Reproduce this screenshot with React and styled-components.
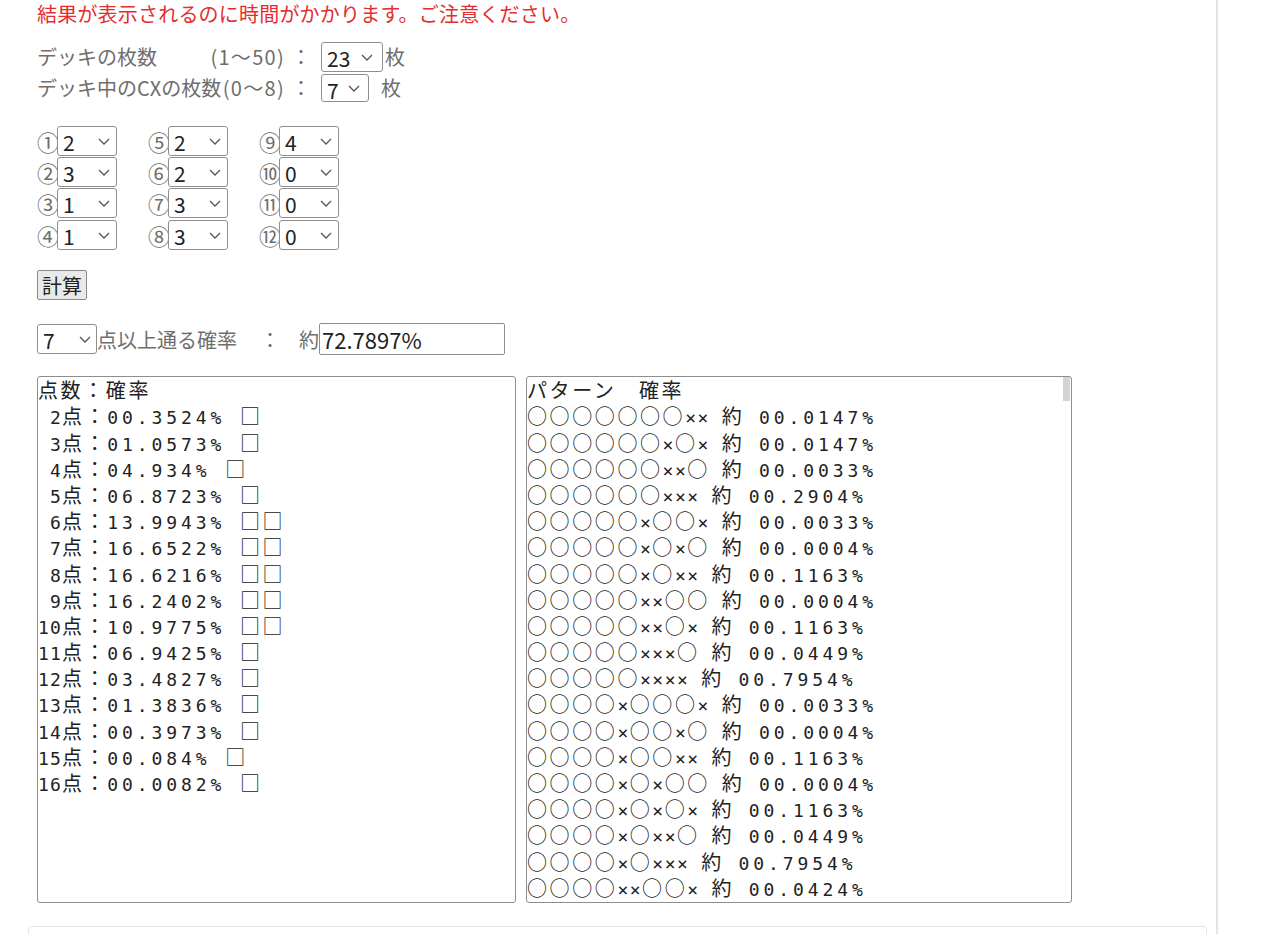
import styled, { createGlobalStyle } from "styled-components";

const GlobalStyle = createGlobalStyle`
  html, body {
    margin: 0;
    padding: 0;
    background: #fff;
    overflow: hidden;
  }
  body {
    font-family: "Noto Sans CJK JP", "Noto Sans", sans-serif;
    color: #222;
  }
`;

const Page = styled.div`
  height: 100vh;
  display: flex;
`;

const Main = styled.main`
  width: 1218px;
  box-sizing: border-box;
  border-right: 2px solid #e4e4e4;
  padding: 0 9px 0 37px;
`;

const Notice = styled.p`
  margin: 0;
  color: #e42d2d;
  font-size: 20px;
  line-height: 28px;
  letter-spacing: 0.2px;
`;

const Fields = styled.div`
  margin-top: 13px;
`;

const FieldRow = styled.div`
  display: flex;
  align-items: center;
  height: 31px;
  font-size: 20px;
  color: #6e6e6e;
`;

const FieldName = styled.span`
  width: 248px;
  display: flex;
  justify-content: space-between;
`;

const Range = styled.span`
  letter-spacing: 1.3px;
`;

const Colon = styled.span`
  width: 36px;
  box-sizing: border-box;
  padding-left: 6px;
`;

const Unit = styled.span`
  margin-left: ${(p) => p.$gap || 0}px;
`;

const SelectWrap = styled.span`
  position: relative;
  display: inline-flex;
`;

const Select = styled.select`
  box-sizing: border-box;
  appearance: none;
  width: ${(p) => p.$w}px;
  height: ${(p) => p.$h || 30}px;
  font-family: inherit;
  font-size: 21px;
  color: #222;
  background: #fff;
  border: 1px solid #8e8e8e;
  border-radius: 3px;
  padding: 0 0 0 5px;
`;

const Chevron = styled.svg`
  position: absolute;
  top: 50%;
  right: ${(p) => p.$right || 7}px;
  width: 12px;
  height: 7px;
  margin-top: -3px;
  pointer-events: none;
`;

function Dropdown({ w, h, right, value, options }) {
  return (
    <SelectWrap>
      <Select $w={w} $h={h} defaultValue={value}>
        {options.map((n) => (
          <option key={n} value={n}>{n}</option>
        ))}
      </Select>
      <Chevron $right={right} viewBox="0 0 12 7">
        <path d="M1 1 L6 6 L11 1" fill="none" stroke="#555" strokeWidth="1.3" />
      </Chevron>
    </SelectWrap>
  );
}

const CardGrid = styled.div`
  margin-top: 22px;
  display: grid;
  grid-auto-flow: column;
  grid-template-rows: repeat(4, 31.3px);
  grid-template-columns: repeat(3, max-content);
  column-gap: 31px;
`;

const CardCell = styled.label`
  display: flex;
  align-items: center;
`;

const CardNo = styled.span`
  width: 20px;
  font-size: 22px;
  letter-spacing: -2px;
  color: #6e6e6e;
  white-space: nowrap;
`;

const CalcButton = styled.button`
  display: block;
  margin-top: 20px;
  height: 30px;
  padding: 0 4px;
  font-family: inherit;
  font-size: 20px;
  color: #222;
  background: #e9e9e9;
  border: 1px solid #8a8a8a;
  border-radius: 2px;
`;

const ThresholdRow = styled.div`
  margin-top: 23px;
  display: flex;
  align-items: center;
  height: 32px;
  font-size: 20px;
  color: #6e6e6e;
`;

const Sep = styled.span`
  margin: 0 19px 0 23px;
`;

const RateInput = styled.input`
  box-sizing: border-box;
  width: 186px;
  height: 32px;
  font-family: inherit;
  font-size: 22px;
  color: #222;
  border: 1px solid #8e8e8e;
  border-radius: 2px;
  padding: 0 2px;
`;

const Results = styled.div`
  margin-top: 21px;
  display: flex;
  gap: 10px;
  height: 527px;
`;

const ResultBox = styled.div`
  position: relative;
  box-sizing: border-box;
  width: ${(p) => p.$w}px;
  height: 100%;
  border: 1px solid #8e8e8e;
  border-radius: 3px;
  overflow: hidden;
  color: #222;
`;

const ScrollArea = styled.div`
  height: 100%;
  overflow-y: auto;
  overflow-x: hidden;
  scrollbar-width: none;
`;

const ScrollThumb = styled.div`
  position: absolute;
  top: 0;
  right: 1px;
  width: 7px;
  height: 24px;
  background: #d4d4d4;
`;

const Line = styled.div`
  height: 26.2px;
  line-height: 26.2px;
  white-space: pre;
`;

const Wide = styled.span`
  font-family: "Noto Sans CJK JP", sans-serif;
  font-size: 20px;
  letter-spacing: 2.6px;
`;

const Mono = styled.span`
  font-family: "DejaVu Sans Mono", monospace;
  font-size: 18px;
  letter-spacing: ${(p) => p.$track ?? 3.9}px;
`;

const NextPanel = styled.section`
  margin: 23px 0 0 -9px;
  height: 60px;
  border: 1px solid #e6e6e6;
  border-radius: 3px;
`;

const range = (a, b) => Array.from({ length: b - a + 1 }, (_, i) => a + i);

const cards = [
  ["①", 2], ["②", 3], ["③", 1], ["④", 1],
  ["⑤", 2], ["⑥", 2], ["⑦", 3], ["⑧", 3],
  ["⑨", 4], ["⑩", 0], ["⑪", 0], ["⑫", 0],
];

const scoreRows = [
  [" 2", "00.3524%", "□"],
  [" 3", "01.0573%", "□"],
  [" 4", "04.934%", "□"],
  [" 5", "06.8723%", "□"],
  [" 6", "13.9943%", "□□"],
  [" 7", "16.6522%", "□□"],
  [" 8", "16.6216%", "□□"],
  [" 9", "16.2402%", "□□"],
  ["10", "10.9775%", "□□"],
  ["11", "06.9425%", "□"],
  ["12", "03.4827%", "□"],
  ["13", "01.3836%", "□"],
  ["14", "00.3973%", "□"],
  ["15", "00.084%", "□"],
  ["16", "00.0082%", "□"],
];

const patterns = [
  ["○○○○○○○××", "00.0147%"],
  ["○○○○○○×○×", "00.0147%"],
  ["○○○○○○××○", "00.0033%"],
  ["○○○○○○×××", "00.2904%"],
  ["○○○○○×○○×", "00.0033%"],
  ["○○○○○×○×○", "00.0004%"],
  ["○○○○○×○××", "00.1163%"],
  ["○○○○○××○○", "00.0004%"],
  ["○○○○○××○×", "00.1163%"],
  ["○○○○○×××○", "00.0449%"],
  ["○○○○○××××", "00.7954%"],
  ["○○○○×○○○×", "00.0033%"],
  ["○○○○×○○×○", "00.0004%"],
  ["○○○○×○○××", "00.1163%"],
  ["○○○○×○×○○", "00.0004%"],
  ["○○○○×○×○×", "00.1163%"],
  ["○○○○×○××○", "00.0449%"],
  ["○○○○×○×××", "00.7954%"],
  ["○○○○××○○×", "00.0424%"],
];

// the rest of the list, below the visible part of the scroll box
for (let n = 0b111100101; n >= 0; n--) {
  const bits = n.toString(2).padStart(9, "0");
  if (bits.split("1").length - 1 > 7) continue;
  const p = (((n * 37) % 1200) / 10000).toFixed(4);
  patterns.push([bits.replace(/1/g, "○").replace(/0/g, "×"), `0${p}%`]);
}

function PatternLine({ pattern, pct }) {
  const runs = [];
  for (const ch of pattern) {
    const kind = ch === "×" ? "cross" : "circle";
    const last = runs[runs.length - 1];
    if (last && last.kind === kind) last.text += ch;
    else runs.push({ kind, text: ch });
  }
  return (
    <Line>
      {runs.map((r, i) =>
        r.kind === "cross" ? (
          <Mono key={i} $track={1.5}>{r.text}</Mono>
        ) : (
          <Wide key={i}>{r.text}</Wide>
        )
      )}
      <Mono $track={1}> </Mono>
      <Wide>約</Wide>
      <Mono> {pct}</Mono>
    </Line>
  );
}

export default function App() {
  return (
    <Page>
      <GlobalStyle />
      <Main>
        <Notice>結果が表示されるのに時間がかかります。ご注意ください。</Notice>

        <Fields>
          <FieldRow>
            <FieldName>
              <span>デッキの枚数</span>
              <Range>(1〜50)</Range>
            </FieldName>
            <Colon>：</Colon>
            <Dropdown w={62} right={10} value={23} options={range(1, 50)} />
            <Unit $gap={2}>枚</Unit>
          </FieldRow>
          <FieldRow>
            <FieldName>
              <span>デッキ中のCXの枚数</span>
              <Range>(0〜8)</Range>
            </FieldName>
            <Colon>：</Colon>
            <Dropdown w={48} h={28} right={9} value={7} options={range(0, 8)} />
            <Unit $gap={12}>枚</Unit>
          </FieldRow>
        </Fields>

        <CardGrid>
          {cards.map(([no, v]) => (
            <CardCell key={no}>
              <CardNo>{no}</CardNo>
              <Dropdown w={60} value={v} options={range(0, 4)} />
            </CardCell>
          ))}
        </CardGrid>

        <CalcButton>計算</CalcButton>

        <ThresholdRow>
          <Dropdown w={60} right={6} value={7} options={range(1, 16)} />
          <span>点以上通る確率</span>
          <Sep>：</Sep>
          <span>約</span>
          <RateInput readOnly defaultValue="72.7897%" />
        </ThresholdRow>

        <Results>
          <ResultBox $w={479}>
            <Line>
              <Wide>点数：確率</Wide>
            </Line>
            {scoreRows.map(([lead, pct, bars]) => (
              <Line key={lead}>
                <Mono $track={1.2}>{lead}</Mono>
                <Wide>点：</Wide>
                <Mono>{pct} </Mono>
                <Wide>{bars}</Wide>
              </Line>
            ))}
          </ResultBox>
          <ResultBox $w={546}>
            <ScrollArea>
              <Line>
                <Wide>パターン　確率</Wide>
              </Line>
              {patterns.map(([pattern, pct], i) => (
                <PatternLine key={i} pattern={pattern} pct={pct} />
              ))}
            </ScrollArea>
            <ScrollThumb />
          </ResultBox>
        </Results>

        <NextPanel />
      </Main>
    </Page>
  );
}
